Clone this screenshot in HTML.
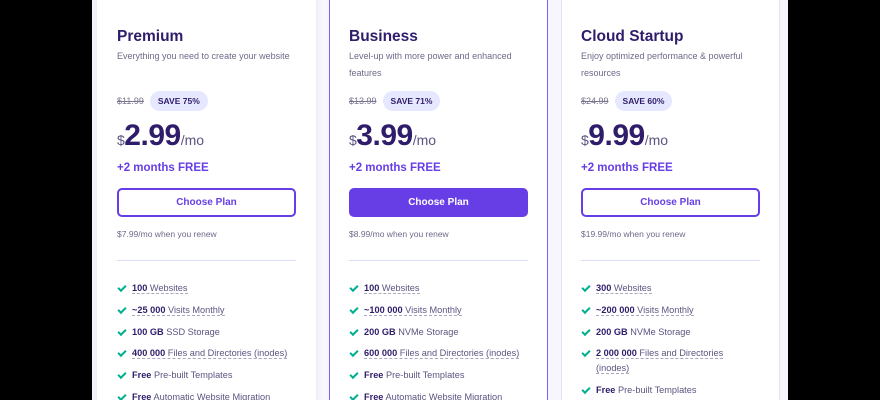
<!DOCTYPE html>
<html><head><meta charset="utf-8"><style>
*{box-sizing:border-box;margin:0;padding:0}
html,body{width:880px;height:400px;overflow:hidden}
body{background:#000;font-family:"Liberation Sans",sans-serif;position:relative}
.bg{position:absolute;left:92px;top:0;width:696px;height:400px;background:#f6f6fc}
.card{position:absolute;top:-10px;width:219px;height:430px;background:#fff;padding:37px 20px 0 20px;color:#2f1c6a}
.c1{left:97px;box-shadow:0 0 6px rgba(120,120,180,.15)}
.c2{left:329px;border:1px solid #7a62f0;padding-left:19px;padding-top:36px}
.c3{left:561px;border:1px solid #e4e4f4;padding-left:19px;padding-top:36px}
h2{font-size:15.5px;font-weight:bold;line-height:20px;color:#2f1c6a}
.sub{font-size:9px;color:#6d6a88;line-height:17px;margin-top:1px;height:40px}
.old{position:absolute;top:101px;display:flex;align-items:center;font-size:9px;color:#77758f}
.old s{margin-right:6px}
.badge{background:#e6e8ff;color:#2f1c6a;font-weight:bold;font-size:8.5px;border-radius:10px;padding:5px 8px}
.price{position:absolute;top:129px;font-size:30px;font-weight:bold;color:#2f1c6a;letter-spacing:-.5px}
.price .d{font-size:14px;font-weight:normal;color:#5a5580}
.price .m{font-size:14px;font-weight:normal;color:#5a5580;letter-spacing:0}
.free{position:absolute;top:172px;font-size:11.5px;font-weight:bold;color:#673de6}
.btn{position:absolute;top:198px;width:179px;height:29px;border:2px solid #673de6;border-radius:5px;color:#673de6;font-size:10px;font-weight:bold;text-align:center;line-height:25px}
.c2 .btn{background:#673de6;color:#fff}
.renew{position:absolute;top:239px;font-size:8.5px;color:#6d6a88}
.hr{position:absolute;top:270px;width:179px;height:1px;background:#dadcfc}
ul{position:absolute;top:288px;list-style:none;width:200px}
.c2 .old,.c3 .old{top:100px}.c2 .price,.c3 .price{top:128px}.c2 .free,.c3 .free{top:171px}.c2 .btn,.c3 .btn{top:197px}.c2 .renew,.c3 .renew{top:238px}.c2 .hr,.c3 .hr{top:269px}.c2 ul,.c3 ul{top:287px}
li{font-size:9.2px;color:#5a5580;line-height:21.8px;padding-left:15px;position:relative}
li:before{content:"";position:absolute;left:1px;top:7px;width:6px;height:3px;border-left:2px solid #00b090;border-bottom:2px solid #00b090;transform:rotate(-45deg)}
li b{color:#2f1c6a}
.u{border-bottom:1px dashed #a8a6c0}
li.wrap{line-height:15px;padding-top:3px;padding-bottom:4px}
li.wrap:before{top:7px}
</style></head><body>
<div class="bg"></div>
<div class="card c1">
<h2>Premium</h2>
<div class="sub">Everything you need to create your website</div>
<div class="old"><s>$11.99</s><span class="badge">SAVE 75%</span></div>
<div class="price"><span class="d">$</span>2.99<span class="m">/mo</span></div>
<div class="free">+2 months FREE</div>
<div class="btn">Choose Plan</div>
<div class="renew">$7.99/mo when you renew</div>
<div class="hr"></div>
<ul>
<li><span class="u"><b>100</b> Websites</span></li>
<li><span class="u"><b>~25 000</b> Visits Monthly</span></li>
<li><b>100 GB</b> SSD Storage</li>
<li><span class="u"><b>400 000</b> Files and Directories (inodes)</span></li>
<li><b>Free</b> Pre-built Templates</li>
<li><b>Free</b> Automatic Website Migration</li>
</ul>
</div>
<div class="card c2">
<h2>Business</h2>
<div class="sub">Level-up with more power and enhanced features</div>
<div class="old"><s>$13.99</s><span class="badge">SAVE 71%</span></div>
<div class="price"><span class="d">$</span>3.99<span class="m">/mo</span></div>
<div class="free">+2 months FREE</div>
<div class="btn">Choose Plan</div>
<div class="renew">$8.99/mo when you renew</div>
<div class="hr"></div>
<ul>
<li><span class="u"><b>100</b> Websites</span></li>
<li><span class="u"><b>~100 000</b> Visits Monthly</span></li>
<li><b>200 GB</b> NVMe Storage</li>
<li><span class="u"><b>600 000</b> Files and Directories (inodes)</span></li>
<li><b>Free</b> Pre-built Templates</li>
<li><b>Free</b> Automatic Website Migration</li>
</ul>
</div>
<div class="card c3">
<h2>Cloud Startup</h2>
<div class="sub">Enjoy optimized performance &amp; powerful resources</div>
<div class="old"><s>$24.99</s><span class="badge">SAVE 60%</span></div>
<div class="price"><span class="d">$</span>9.99<span class="m">/mo</span></div>
<div class="free">+2 months FREE</div>
<div class="btn">Choose Plan</div>
<div class="renew">$19.99/mo when you renew</div>
<div class="hr"></div>
<ul>
<li><span class="u"><b>300</b> Websites</span></li>
<li><span class="u"><b>~200 000</b> Visits Monthly</span></li>
<li><b>200 GB</b> NVMe Storage</li>
<li class="wrap"><span class="u"><b>2 000 000</b> Files and Directories</span><br><span class="u">(inodes)</span></li>
<li><b>Free</b> Pre-built Templates</li>
</ul>
</div>
</body></html>
